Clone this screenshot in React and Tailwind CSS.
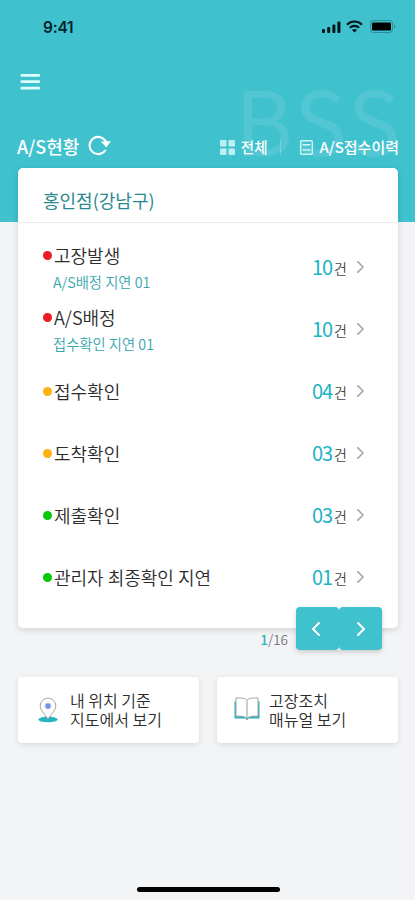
const rows = [
  { title: '고장발생', sub: 'A/S배정 지연 01', count: '10', dot: 'bg-[#ec1c24]' },
  { title: 'A/S배정', sub: '접수확인 지연 01', count: '10', dot: 'bg-[#ec1c24]' },
  { title: '접수확인', count: '04', dot: 'bg-[#ffb20d]' },
  { title: '도착확인', count: '03', dot: 'bg-[#ffb20d]' },
  { title: '제출확인', count: '03', dot: 'bg-[#08c808]' },
  { title: '관리자 최종확인 지연', count: '01', dot: 'bg-[#08c808]' },
]

function StatusBar() {
  return (
    <div className="h-[54px] flex items-center justify-between pl-[43px] pr-[19px]">
      <span className="font-['Inter'] text-[15.5px] leading-none font-semibold tracking-[-0.2px] pt-px text-[#05242b]">9:41</span>
      <div className="flex items-center text-[#03161a]">
        <svg className="w-[19px] h-[12px]" viewBox="0 0 19 12" fill="currentColor">
          <rect x="0" y="8" width="3" height="4" rx="1" />
          <rect x="5.2" y="6" width="3" height="6" rx="1" />
          <rect x="10.4" y="3.5" width="3" height="8.5" rx="1" />
          <rect x="15.4" y="0.5" width="3" height="11.5" rx="1" />
        </svg>
        <svg className="w-[17px] h-[13px] ml-[5px] -mt-px" viewBox="0 0 17 13" fill="none" stroke="currentColor" strokeWidth="2.1">
          <path d="M1 4.7C5.2.5 11.8.5 16 4.7" />
          <path d="M3.9 7.7c2.6-2.5 6.6-2.5 9.2 0" />
          <path d="M8.5 12.4 6 9.9c1.4-1.3 3.6-1.3 5 0Z" fill="currentColor" stroke="none" />
        </svg>
        <svg className="w-[26px] h-[13px] ml-[7px] -mt-px" viewBox="0 0 26 13">
          <rect x="0.5" y="0.5" width="22" height="12" rx="3" fill="none" stroke="currentColor" strokeOpacity="0.3" />
          <rect x="2" y="2.5" width="19" height="8" rx="1.2" fill="#000" />
          <path d="M24 4.5v4c1.2-.4 1.2-3.6 0-4Z" fill="currentColor" fillOpacity="0.4" />
        </svg>
      </div>
    </div>
  )
}

function Chevron({ className, left }) {
  return (
    <svg className={className} viewBox="0 0 8 14" fill="none" stroke="currentColor" strokeLinecap="round" strokeLinejoin="round">
      <path d={left ? 'M7 1 1 7l6 6' : 'm1 1 6 6-6 6'} />
    </svg>
  )
}

function RefreshIcon() {
  return (
    <svg className="w-[23px] h-[21px] ml-[9px] -mt-px" viewBox="0 0 23 21">
      <path d="M17.2 15.5A8.6 8.6 0 1 1 18.3 7.6" fill="none" stroke="#fff" strokeWidth="2.1" strokeLinecap="round" />
      <path d="M12.8 6.6 22.8 6l-4.3 6.4Z" fill="#fff" />
    </svg>
  )
}

function PinIcon() {
  return (
    <svg className="w-[20px] h-[26px]" viewBox="0 0 20 26">
      <ellipse cx="10" cy="22.4" rx="9.7" ry="2.8" fill="#25b4c0" />
      <path d="M10 22.6C8 17.8 2.2 14 2.2 8.8a7.8 7.8 0 0 1 15.6 0c0 5.2-5.8 9-7.8 13.8Z" fill="#fff" stroke="#9b9b93" strokeWidth="0.9" />
      <circle cx="10" cy="9" r="3" fill="#7591e2" stroke="#b9c8f3" />
    </svg>
  )
}

function BookIcon() {
  return (
    <svg className="w-[26px] h-[24px] -mt-[2px]" viewBox="0 0 26 24">
      <path d="M.5 4.5h25v17h-11L13 23l-1.500-1.500H.5Z" fill="#2ab5c1" />
      <path d="M13 3.3C11.5 1.3 8 .8 2 1v18.2c6-.2 9.5.3 11 2.3 1.500-2 5-2.500 11-2.300V1c-6-.2-9.500.3-11 2.300Z" fill="#fff" stroke="#9a9a9a" strokeWidth="0.9" />
      <path d="M13 3.3V23" stroke="#8d8d8d" strokeWidth="0.9" />
    </svg>
  )
}

function StatusRow({ row }) {
  return (
    <li className="h-[62px] flex items-center justify-between pl-[25px] pr-[34px]">
      <div className={row.sub ? 'pt-[4px]' : ''}>
        <div className="flex items-center">
          <span className={`w-[9px] h-[9px] rounded-full mr-[2px] ${row.dot}`} />
          <span className="text-[18px] leading-[26px] text-[#2c2c2c]">{row.title}</span>
        </div>
        {row.sub && <p className="pl-[10px] text-[14.3px] leading-[28px] text-[#35a5ae]">{row.sub}</p>}
      </div>
      <div className="flex items-center">
        <span className="text-[20px] leading-[26px] font-normal tracking-[-1.1px] text-[#20b3c2]">{row.count}</span>
        <span className="text-[14px] leading-[26px] text-[#444] ml-[2px] mt-px">건</span>
        <Chevron className="w-[7px] h-[12px] ml-[10px] text-[#aaa] stroke-2" />
      </div>
    </li>
  )
}

function ShortcutCard({ icon, lines, className }) {
  return (
    <button className={`w-[181px] h-[66px] flex items-center bg-white rounded-[4px] shadow-[0_2px_6px_rgba(0,0,0,0.1)] text-left ${className}`}>
      {icon}
      <span className="text-[16px] leading-[19px] text-[#2c2c2c]">
        {lines[0]}
        <br />
        {lines[1]}
      </span>
    </button>
  )
}

export default function App() {
  return (
    <div className="relative w-full h-[900px] overflow-hidden flex flex-col bg-[#f2f4f6] font-['Noto_Sans_CJK_KR','Noto_Sans',sans-serif] font-[350]">
      <header className="relative h-[222px] shrink-0 bg-[#3fc1ce]">
        <span className="absolute left-[235px] top-[74px] text-[88px] leading-[88px] font-normal tracking-[2.5px] text-white/10">BSS</span>
        <StatusBar />
        <button className="block ml-[20px] mt-[20px]" aria-label="메뉴">
          <svg className="w-[21px] h-[17px]" viewBox="0 0 21 17" fill="#d9ffff">
            <rect x="0.5" y="0" width="19.5" height="2.8" rx="1" />
            <rect x="0.5" y="6.3" width="19.5" height="2.8" rx="1" />
            <rect x="0.5" y="12.8" width="19.5" height="2.8" rx="1" />
          </svg>
        </button>
        <div className="relative flex items-center justify-between h-[26px] mt-[42px] pl-[17px] pr-[16px] text-white">
          <div className="flex items-center">
            <h1 className="text-[18px] leading-[26px] font-medium">A/S현황</h1>
            <RefreshIcon />
          </div>
          <div className="flex items-center text-[14.5px] leading-[26px] font-medium pt-[2px]">
            <svg className="w-[15px] h-[15px] mr-[6px]" viewBox="0 0 15 15" fill="#bdeff3">
              <rect width="6.5" height="6.5" rx="1" />
              <rect x="8.5" width="6.5" height="6.5" rx="1" />
              <rect y="8.5" width="6.5" height="6.5" rx="1" />
              <rect x="8.5" y="8.5" width="6.5" height="6.5" rx="1" />
            </svg>
            <span>전체</span>
            <span className="w-px h-[16px] ml-[13px] mr-[19px] bg-white/20" />
            <svg className="w-[13px] h-[15px] mr-[6px]" viewBox="0 0 13 15" fill="none" stroke="#d0f6f8" strokeWidth="1.4">
              <rect x="0.7" y="0.7" width="11.6" height="13.6" rx="1" />
              <path d="M2.5 4.8h8M2.5 10h8" />
            </svg>
            <span className="text-[15px]">A/S접수이력</span>
          </div>
        </div>
      </header>

      <main className="relative -mt-[54px] pl-[18px] pr-[17px]">
        <section className="h-[460px] bg-white rounded-[5px] shadow-[0_2px_6px_rgba(0,0,0,0.14)]">
          <h2 className="h-[55px] pl-[25px] pt-[6px] border-b border-[#eceef0] text-[18px] leading-[52px] font-normal text-[#2a8990]">홍인점(강남구)</h2>
          <ul className="pt-[13px]">
            {rows.map((row) => (
              <StatusRow key={row.title} row={row} />
            ))}
          </ul>
        </section>

        <div className="relative -mt-[21px] flex justify-end pr-[16px]">
          <span className="mt-[23px] mr-[8px] text-[13.5px] leading-[18px] text-[#777]">
            <b className="font-medium text-[#2cb6c4]">1</b>/16
          </span>
          <div className="flex text-white rounded-[4px] shadow-[0_2px_5px_rgba(0,0,0,0.18)]">
            <button className="w-[43px] h-[43px] flex items-center justify-center rounded-[4px] bg-[#3fc1ce]" aria-label="이전">
              <Chevron left className="w-[8px] h-[14px] mr-[3px] stroke-2" />
            </button>
            <button className="w-[43px] h-[43px] flex items-center justify-center rounded-[4px] bg-[#3fc1ce]" aria-label="다음">
              <Chevron className="w-[8px] h-[14px] stroke-2" />
            </button>
          </div>
        </div>

        <div className="flex justify-between mt-[27px]">
          <ShortcutCard className="pl-[20px] gap-[12px]" icon={<PinIcon />} lines={['내 위치 기준', '지도에서 보기']} />
          <ShortcutCard className="pl-[17px] gap-[9px]" icon={<BookIcon />} lines={['고장조치', '매뉴얼 보기']} />
        </div>
      </main>

      <div className="mt-auto mb-[8px] ml-[137px] w-[143px] h-[5px] rounded-full bg-black" />
    </div>
  )
}
